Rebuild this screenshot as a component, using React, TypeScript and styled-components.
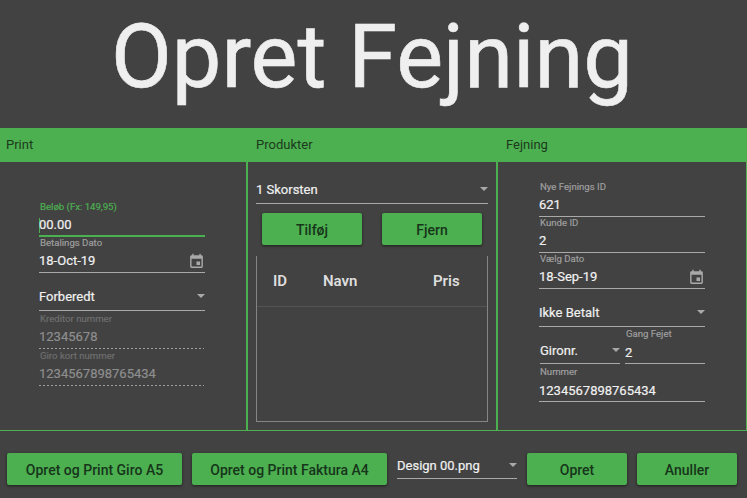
import React from "react";
import styled, { createGlobalStyle, css } from "styled-components";

const GREEN = "#4caf50";
const PAPER = "#424242";
const LINE = "#a9a9a9";

const GlobalStyle = createGlobalStyle`
  * { box-sizing: border-box; }
  body {
    margin: 0;
    background: ${PAPER};
    font-family: Roboto, "Liberation Sans", sans-serif;
    color: #f0f0f0;
  }
`;

const Window = styled.main`
  display: flex;
  flex-direction: column;
  width: 747px;
  height: 498px;
  overflow: hidden;
  background: ${PAPER};
`;

const Title = styled.h1`
  margin: 0;
  height: 128px;
  padding: 5px 3px 0 0;
  text-align: center;
  font-size: 88.4px;
  line-height: 104px;
  font-weight: 400;
  white-space: nowrap;
  color: #efefef;
  -webkit-text-stroke: 0.6px #efefef;
`;

const Groups = styled.div`
  display: grid;
  grid-template-columns: 247px 250px 250px;
  height: 303px;
`;

const Group = styled.section<{ $first?: boolean }>`
  display: flex;
  flex-direction: column;
  border: 1px solid ${GREEN};
  border-top: 0;
  ${(p) => p.$first && "border-left: 0;"}
`;

const GroupHeader = styled.header<{ $first?: boolean }>`
  flex: none;
  height: 34px;
  padding-left: ${(p) => (p.$first ? 6 : 8)}px;
  background: ${GREEN};
  color: #1c3a1d;
  font-size: 13px;
  line-height: 33px;
`;

const Form = styled.div<{ $top: number; $left: number }>`
  display: flex;
  flex-direction: column;
  width: 166px;
  margin: ${(p) => p.$top}px 0 0 ${(p) => p.$left}px;
`;

const valueText = css`
  font-size: 13px;
  line-height: 16px;
  white-space: nowrap;
  -webkit-text-stroke: 0.2px currentColor;
`;

const FieldBox = styled.div<{ $height: number; $disabled?: boolean; $focused?: boolean }>`
  display: flex;
  flex-direction: column;
  justify-content: space-between;
  flex: none;
  height: ${(p) => p.$height}px;
  padding-top: ${(p) => p.$height - 36}px;
  border-bottom: 1px solid ${LINE};
  ${(p) => p.$focused && css`border-bottom: 2px solid ${GREEN};`}
  ${(p) =>
    p.$disabled &&
    css`
      border-bottom: 0;
      color: #8e8e8e;
      background: repeating-linear-gradient(90deg, #9c9c9c 0 2.4px, transparent 2.4px 4px) left bottom / 165px 1px no-repeat;
    `}
`;

const Label = styled.label<{ $tone?: "focus" | "disabled" }>`
  padding-left: 1px;
  font-size: 9.6px;
  line-height: 12px;
  white-space: nowrap;
  -webkit-text-stroke: 0.2px currentColor;
  color: ${(p) => (p.$tone === "focus" ? GREEN : p.$tone === "disabled" ? "#6e6e6e" : "#9e9e9e")};
`;

const ValueRow = styled.div<{ $lift: number }>`
  display: flex;
  align-items: center;
  justify-content: space-between;
  height: 16px;
  margin-bottom: ${(p) => p.$lift}px;
  ${valueText}
`;

const Caret = styled.i`
  width: 1px;
  height: 15px;
  margin-right: -1px;
  background: ${GREEN};
`;

const Select = styled.div<{ $width?: number; $height: number; $lift?: number; $inset?: number }>`
  display: flex;
  flex: none;
  align-items: flex-end;
  justify-content: space-between;
  width: ${(p) => (p.$width ? `${p.$width}px` : "auto")};
  height: ${(p) => p.$height}px;
  margin-left: ${(p) => p.$inset ?? 0}px;
  padding-bottom: ${(p) => p.$lift ?? 5}px;
  border-bottom: 1px solid ${LINE};
  ${valueText}
`;

const ArrowIcon = styled.svg`
  display: block;
  flex: none;
  width: 8px;
  height: 4px;
  margin-bottom: 7px;
  fill: ${LINE};
`;

const CalendarIcon = styled.svg`
  flex: none;
  width: 17px;
  height: 17px;
  margin: 1px 0 0;
  fill: ${LINE};
`;

const Split = styled.div`
  display: flex;
  justify-content: space-between;
`;

const Half = styled.div`
  width: 80px;
`;

const Products = styled.div`
  display: flex;
  flex: 1;
  flex-direction: column;
  padding: 0 8px 8px;
`;

const ProductActions = styled.div`
  display: flex;
  gap: 20px;
  margin: 9px 0 11px;
  padding-left: 6px;
`;

const Button = styled.button<{ $width: number }>`
  flex: none;
  width: ${(p) => p.$width}px;
  height: 32px;
  padding: 2px 0 0;
  border: 0;
  border-radius: 2px;
  background: ${GREEN};
  box-shadow: 0 1px 3px rgba(0, 0, 0, 0.55);
  color: #16351a;
  font-family: inherit;
  font-size: 14px;
  font-weight: 500;
  line-height: 30px;
  white-space: nowrap;
`;

const Table = styled.div`
  flex: 1;
  border: 1px solid #858585;
  border-top: 0;
`;

const TableHead = styled.div`
  display: grid;
  grid-template-columns: 50px 110px 1fr;
  height: 51px;
  padding-left: 16px;
  border-bottom: 1px solid #545454;
  font-size: 15px;
  font-weight: 600;
  line-height: 50px;
  color: #dedede;
`;

const Footer = styled.footer`
  display: flex;
  gap: 10px;
  padding: 22px 0 0 7px;
`;

function Arrow() {
  return (
    <ArrowIcon viewBox="0 0 8 4">
      <path d="M0 0h8L4 4z" />
    </ArrowIcon>
  );
}

function Calendar() {
  return (
    <CalendarIcon viewBox="0 0 24 24">
      <path d="M19 19H5V8h14m-3-7v2H8V1H6v2H5c-1.1 0-2 .9-2 2v14a2 2 0 0 0 2 2h14a2 2 0 0 0 2-2V5a2 2 0 0 0-2-2h-1V1m-1 11h-5v5h5v-5z" />
    </CalendarIcon>
  );
}

interface FieldProps {
  label: string;
  value: string;
  height?: number;
  lift?: number;
  disabled?: boolean;
  date?: boolean;
}

function Field({ label, value, height = 36, lift = 3, disabled, date }: FieldProps) {
  return (
    <FieldBox $height={height} $disabled={disabled}>
      <Label $tone={disabled ? "disabled" : undefined}>{label}</Label>
      <ValueRow $lift={lift}>
        <span>{value}</span>
        {date && <Calendar />}
      </ValueRow>
    </FieldBox>
  );
}

const FocusedValue = styled.span`
  display: flex;
  align-items: center;
`;

function AmountField() {
  return (
    <FieldBox $height={36} $focused>
      <Label $tone="focus">Beløb (Fx: 149,95)</Label>
      <ValueRow $lift={2}>
        <FocusedValue>
          <Caret />
          00.00
        </FocusedValue>
      </ValueRow>
    </FieldBox>
  );
}

export default function App() {
  return (
    <>
      <GlobalStyle />
      <Window>
        <Title>Opret Fejning</Title>
        <Groups>
          <Group $first>
            <GroupHeader $first>Print</GroupHeader>
            <Form $top={39} $left={39}>
              <AmountField />
              <Field label="Betalings Dato" value="18-Oct-19" date />
              <Select $height={38}>
                Forberedt
                <Arrow />
              </Select>
              <Field label="Kreditor nummer" value="12345678" height={38} lift={4} disabled />
              <Field label="Giro kort nummer" value="1234567898765434" height={37} lift={4} disabled />
            </Form>
          </Group>
          <Group>
            <GroupHeader>Produkter</GroupHeader>
            <Products>
              <Select $height={42}>
                1 Skorsten
                <Arrow />
              </Select>
              <ProductActions>
                <Button $width={100}>Tilføj</Button>
                <Button $width={100}>Fjern</Button>
              </ProductActions>
              <Table>
                <TableHead>
                  <span>ID</span>
                  <span>Navn</span>
                  <span>Pris</span>
                </TableHead>
              </Table>
            </Products>
          </Group>
          <Group>
            <GroupHeader>Fejning</GroupHeader>
            <Form $top={19} $left={41}>
              <Field label="Nye Fejnings ID" value="621" />
              <Field label="Kunde ID" value="2" />
              <Field label="Vælg Dato" value="18-Sep-19" date />
              <Select $height={38}>
                Ikke Betalt
                <Arrow />
              </Select>
              <Split>
                <Select $width={80} $height={37} $lift={4} $inset={1}>
                  Gironr.
                  <Arrow />
                </Select>
                <Half>
                  <Field label="Gang Fejet" value="2" height={37} lift={2} />
                </Half>
              </Split>
              <Field label="Nummer" value="1234567898765434" height={38} lift={2} />
            </Form>
          </Group>
        </Groups>
        <Footer>
          <Button $width={175}>Opret og Print Giro A5</Button>
          <Button $width={195}>Opret og Print Faktura A4</Button>
          <Select $width={120} $height={26} $lift={4}>
            Design 00.png
            <Arrow />
          </Select>
          <Button $width={100}>Opret</Button>
          <Button $width={100}>Anuller</Button>
        </Footer>
      </Window>
    </>
  );
}
